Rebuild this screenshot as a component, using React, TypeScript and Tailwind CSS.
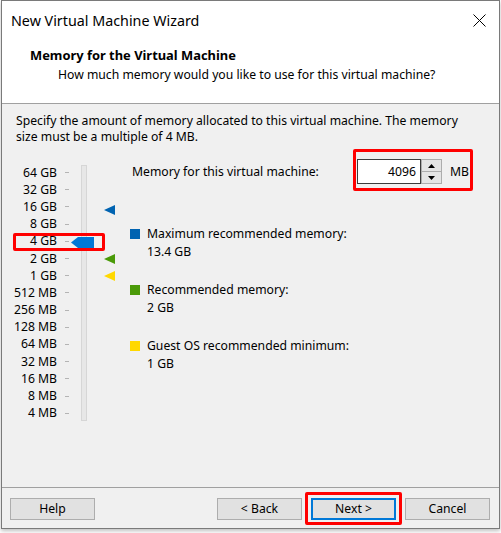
import React from "react";

const labels = ["64 GB","32 GB","16 GB","8 GB","4 GB","2 GB","1 GB","512 MB","256 MB","128 MB","64 MB","32 MB","16 MB","8 MB","4 MB"];

function Tri({ color, top }: { color: string; top: number }) {
  return (
    <svg className="absolute" style={{ left: 102, top }} width="11" height="10" viewBox="0 0 11 10">
      <polygon points="0,5 11,0 11,10" fill={color} />
    </svg>
  );
}

export default function App() {
  return (
    <div className="relative w-[501px] h-[533px] bg-white text-black text-[12.2px] leading-[16px]" style={{ fontFamily: '"Noto Sans", "Segoe UI", sans-serif' }}>
      <div className="ml-[1px] w-[499px] h-[529px] border border-[#7a7a7a] bg-[#f0f0f0] flex flex-col shadow-[0_2px_4px_rgba(0,0,0,0.25)]">
        {/* title bar */}
        <div className="h-[39px] bg-white flex items-center justify-between pl-[9px] pr-[13px]">
          <span className="text-[14.3px] leading-[20px]">New Virtual Machine Wizard</span>
          <svg width="13" height="13" viewBox="0 0 13 13">
            <path d="M0.5 0.5 L12.5 12.5 M12.5 0.5 L0.5 12.5" stroke="#000" strokeWidth="1" />
          </svg>
        </div>
        {/* header */}
        <div className="h-[63px] bg-white pt-[7px]">
          <div className="pl-[28px] font-bold text-[12.9px]">Memory for the Virtual Machine</div>
          <div className="pl-[56px] mt-[4px]">How much memory would you like to use for this virtual machine?</div>
        </div>
        <div className="h-[1px] bg-[#a0a0a0]" />
        {/* body */}
        <div className="flex-1 flex flex-col">
          <div className="pl-[14px] pt-[9px] whitespace-nowrap">
            Specify the amount of memory allocated to this virtual machine. The memory
            <br />
            size must be a multiple of 4 MB.
          </div>
          <div className="relative mt-[19px] flex h-[258px]">
            <div className="flex flex-col">
              {labels.map((l) => (
                <div key={l} className="h-[17.2px] flex items-center">
                  <span className="w-[55px] text-right whitespace-nowrap">{l}</span>
                  <span className="ml-[8px] w-[4px] h-[1px] bg-[#b4b4b4]" />
                </div>
              ))}
            </div>
            <div className="ml-[12px] mt-[1px] w-[6px] h-[256px] bg-[#e7e7e7] border border-[#d6d6d6]" />
            {/* thumb */}
            <svg className="absolute" style={{ left: 69, top: 73 }} width="23" height="11" viewBox="0 0 23 11">
              <polygon points="0,5.5 7,0 23,0 23,11 7,11" fill="#0078d7" />
            </svg>
            <Tri color="#0063b1" top={41} />
            <Tri color="#4a9a08" top={90} />
            <Tri color="#ffd800" top={107} />
            {/* right column */}
            <div className="ml-[43px] -mt-[5px] flex flex-col">
              <div className="h-[25px] flex items-center pl-[2px]">
                <span className="w-[225px] whitespace-nowrap">Memory for this virtual machine:</span>
                <div className="w-[64px] h-[25px] bg-white border border-[#3c3c3c] flex items-center justify-end pr-[4px]">4096</div>
                <div className="w-[21px] h-[25px] border border-[#adadad] flex flex-col">
                  <div className="flex-1 bg-[#e5e5e5] border-b border-[#adadad] flex items-center justify-center">
                    <svg width="7" height="4" viewBox="0 0 7 4"><polygon points="0,4 3.5,0 7,4" fill="#000" /></svg>
                  </div>
                  <div className="flex-1 bg-[#e5e5e5] flex items-center justify-center">
                    <svg width="7" height="4" viewBox="0 0 7 4"><polygon points="0,0 7,0 3.5,4" fill="#000" /></svg>
                  </div>
                </div>
                <span className="ml-[8px]">MB</span>
              </div>
              <div className="mt-[42px] flex items-center">
                <span className="w-[10px] h-[10px] bg-[#0063b1]" />
                <span className="ml-[7px] whitespace-nowrap">Maximum recommended memory:</span>
              </div>
              <div className="mt-[2px] pl-[17px]">13.4 GB</div>
              <div className="mt-[22px] flex items-center">
                <span className="w-[10px] h-[10px] bg-[#4a9a08]" />
                <span className="ml-[7px] whitespace-nowrap">Recommended memory:</span>
              </div>
              <div className="mt-[2px] pl-[17px]">2 GB</div>
              <div className="mt-[22px] flex items-center">
                <span className="w-[10px] h-[10px] bg-[#ffd800]" />
                <span className="ml-[7px] whitespace-nowrap">Guest OS recommended minimum:</span>
              </div>
              <div className="mt-[2px] pl-[17px]">1 GB</div>
            </div>
          </div>
          <div className="flex-1" />
          <div className="h-[1px] bg-[#a0a0a0]" />
          <div className="h-[40px] pt-[10px] pl-[8px] pr-[9px] flex items-start">
            <button className="w-[85px] h-[22px] bg-[#e1e1e1] border border-[#adadad] leading-[20px]">Help</button>
            <div className="flex-1" />
            <button className="w-[85px] h-[22px] bg-[#e1e1e1] border border-[#adadad] leading-[20px]">&lt; Back</button>
            <button className="ml-[9px] w-[85px] h-[22px] bg-[#e1e1e1] border-2 border-[#0078d7] leading-[18px]">Next &gt;</button>
            <button className="ml-[9px] w-[85px] h-[22px] bg-[#e1e1e1] border border-[#adadad] leading-[20px]">Cancel</button>
          </div>
        </div>
      </div>
      {/* annotation boxes */}
      <div className="absolute left-[13px] top-[233px] w-[92px] h-[18px] border-[3px] border-[#ff0000] rounded-[2px]" />
      <div className="absolute left-[353px] top-[149px] w-[120px] h-[42px] border-[3px] border-[#ff0000] rounded-[2px]" />
      <div className="absolute left-[305px] top-[492px] w-[97px] h-[33px] border-[3px] border-[#ff0000] rounded-[2px]" />
    </div>
  );
}
